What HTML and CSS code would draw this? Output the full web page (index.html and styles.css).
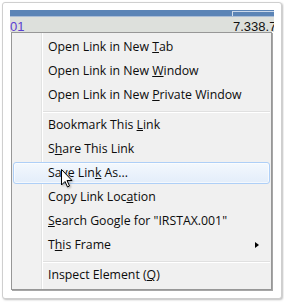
FILE: index.html
```html
<!DOCTYPE html>
<html lang="en">
<head>
  <meta charset="UTF-8">
  <meta name="viewport" content="width=device-width, initial-scale=1.0">
  <title>Link Context Menu</title>
  <link rel="stylesheet" href="styles.css">
</head>
<body>
  <div class="frame">
    <div class="shot">
      <!-- table behind the menu -->
      <div class="grid-head">
        <div class="col-a"></div>
        <div class="col-b"></div>
      </div>
      <div class="grid-row">
        <div class="col-a cell-link">01</div>
        <div class="col-b cell-num">7.338.7</div>
      </div>

      <!-- context menu -->
      <ul class="menu">
        <li class="item"><span>Open Link in New <u>T</u>ab</span></li>
        <li class="item"><span>Open Link in New <u>W</u>indow</span></li>
        <li class="item"><span>Open Link in New <u>P</u>rivate Window</span></li>
        <li class="sep"></li>
        <li class="item"><span>Bookmark This <u>L</u>ink</span></li>
        <li class="item"><span>S<u>h</u>are This Link</span></li>
        <li class="item hover"><span>Sa<u>v</u>e Lin<u>k</u> As...</span></li>
        <li class="item"><span>Copy Link Loc<u>a</u>tion</span></li>
        <li class="item"><span><u>S</u>earch Google for "IRSTAX.001"</span></li>
        <li class="item"><span>T<u>h</u>is Frame</span><span class="arrow"></span></li>
        <li class="sep"></li>
        <li class="item"><span>Inspect Element (<u>Q</u>)</span></li>
      </ul>

      <svg class="cursor" width="14" height="21" viewBox="0 0 14 21">
        <path d="M1.5 1.5 L1.5 17 L5 13.5 L7.5 19 L9.5 18 L7 12.5 L12 12.5 Z" fill="#fff" stroke="#000" stroke-width="1" stroke-linejoin="miter"/>
      </svg>
    </div>
  </div>
</body>
</html>
```

FILE: styles.css
```css
* {
  margin: 0;
  padding: 0;
  box-sizing: border-box;
}

body {
  background-color: #fff;
  font-family: "Open Sans", "Noto Sans", sans-serif;
  width: 284px;
  height: 302px;
  overflow: hidden;
}

.frame {
  margin: 2px 0 0 2px;
  width: 280px;
  height: 297px;
  padding: 7px;
  background-color: #fff;
  border: 1px solid #cfcfcf;
  border-radius: 3px;
  box-shadow: 1px 1px 2px rgba(0, 0, 0, 0.25);
}

.shot {
  position: relative;
  height: 281px;
  overflow: hidden;
}

.grid-head {
  display: flex;
  height: 7px;
  background-color: #5b84b6;
  border-bottom: 1px solid #a9bcd6;
}

.grid-head .col-a {
  width: 221px;
  flex-shrink: 0;
}

.grid-head .col-b {
  flex: 1;
  border-left: 1px solid #d3deec;
  margin-left: 1px;
  border-top: 1px solid #c9d7ea;
  margin-top: 1px;
}

.grid-row {
  display: flex;
  height: 15px;
  background-color: #dde0dc;
  font-family: "Liberation Sans", Arial, sans-serif;
  font-size: 13px;
  line-height: 13px;
  padding-top: 3px;
  white-space: nowrap;
}

.grid-row .col-a {
  width: 223px;
  flex-shrink: 0;
}

.cell-link {
  color: #5a3fd2;
}

.cell-num {
  color: #111;
}

.menu {
  list-style: none;
  display: flex;
  flex-direction: column;
  width: 261px;
  margin-left: 1px;
  padding: 2px 1px;
  border: 1px solid #979797;
  box-shadow: 1px 1px 0 #a6a6a6;
  background: linear-gradient(to right, #f1f1f1 0 29px, #e2e3e3 29px 30px, #fff 30px 31px, #f0f0f0 31px);
  color: #0c0c0c;
  font-size: 12.3px;
}

.item {
  display: flex;
  align-items: center;
  height: 22px;
  margin: 1px 0;
  padding: 0 10px 0 34px;
  line-height: 22px;
  border: 1px solid transparent;
  border-radius: 3px;
  white-space: nowrap;
}

.item u {
  text-underline-offset: 1px;
}

.hover {
  border-color: #aecff7;
  background: linear-gradient(#f3f8fd, #e3edfa);
  box-shadow: inset 0 0 0 1px rgba(255, 255, 255, 0.6);
}

.arrow {
  margin-left: auto;
  width: 0;
  height: 0;
  border-left: 4px solid #000;
  border-top: 3.5px solid transparent;
  border-bottom: 3.5px solid transparent;
}

.sep {
  height: 2px;
  margin: 4px 0 0 30px;
  border-top: 1px solid #e0e0e0;
  border-bottom: 1px solid #fff;
}

.cursor {
  position: absolute;
  left: 50px;
  top: 158px;
  filter: drop-shadow(1px 1px 1px rgba(0, 0, 0, 0.3));
}
```
